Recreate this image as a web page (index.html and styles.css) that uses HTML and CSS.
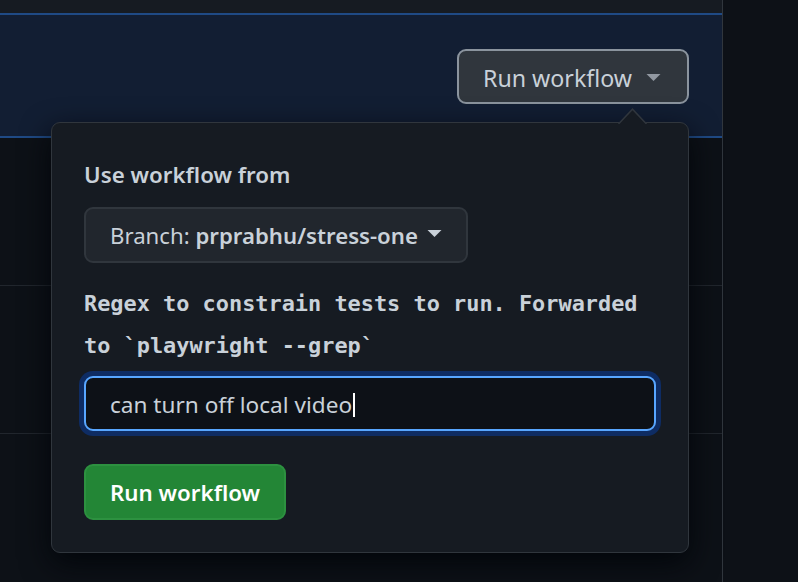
FILE: index.html
```html
<!DOCTYPE html>
<html lang="en">
<head>
<meta charset="utf-8">
<title>Run workflow</title>
<link rel="stylesheet" href="styles.css">
</head>
<body>
<div class="page">
  <main class="col">
    <div class="topbar"></div>
    <section class="banner">
      <button class="btn-run" type="button">
        <span>Run workflow</span>
        <svg class="tri" width="16" height="8" viewBox="0 0 16 8"><path d="M0 0h16L8 8z" fill="currentColor"/></svg>
      </button>
    </section>
    <div class="row"></div>
    <div class="row"></div>
    <div class="row last"></div>

    <div class="popover">
      <svg class="arrow" width="29" height="16" viewBox="0 0 29 16"><path d="M0.5 16 L14.5 1.2 L28.5 16" fill="#161b22" stroke="#30363d" stroke-width="1.5"/></svg>
      <div class="pop-title">Use workflow from</div>
      <button class="btn-branch" type="button">
        <span class="branch-label">Branch: <b>prprabhu/stress-one</b></span>
        <svg class="tri" width="16" height="8" viewBox="0 0 16 8"><path d="M0 0h16L8 8z" fill="currentColor"/></svg>
      </button>
      <div class="field-label">Regex to constrain tests to run. Forwarded to `playwright --grep`</div>
      <div class="input"><span class="value">can turn off local video</span><span class="cursor"></span></div>
      <button class="btn-green" type="button">Run workflow</button>
    </div>
  </main>
  <aside class="side"></aside>
</div>
</body>
</html>
```
FILE: styles.css
```css
html, body {
  margin: 0;
  padding: 0;
  background: #0d1117;
  height: 100%;
  overflow: hidden;
}
body {
  font-family: "Noto Sans", "Open Sans", sans-serif;
  color: #c9d1d9;
}
.page {
  display: flex;
  height: 582px;
}
.col {
  position: relative;
  width: 722px;
  border-right: 1px solid #30363d;
  display: flex;
  flex-direction: column;
  background: #0d1117;
}
.side {
  flex: 1;
  background: #0d1117;
}
.topbar {
  height: 13px;
  background: #161b22;
}
.banner {
  border-top: 2px solid #1f4a85;
  border-bottom: 2px solid #1f4a85;
  background: #121e33;
  display: flex;
  justify-content: flex-end;
  align-items: flex-start;
  padding: 34px 33px 0 0;
  box-sizing: content-box;
  height: 87px;
}
.row {
  height: 147px;
  border-bottom: 1px solid #21262d;
}
.row.last {
  flex: 1;
  border-bottom: 0;
}
button {
  font-family: inherit;
  cursor: pointer;
}
.btn-run {
  height: 55px;
  width: 232px;
  box-sizing: border-box;
  border: 2px solid #8b949e;
  border-radius: 9px;
  background: #30363d;
  color: #c9d1d9;
  font-size: 23.2px;
  display: flex;
  align-items: center;
  gap: 14px;
  padding: 2px 0 0 24px;
}
.btn-run .tri {
  color: #9198a1;
  width: 15px;
  height: 7px;
}
.popover {
  position: absolute;
  left: 51px;
  top: 122px;
  width: 638px;
  box-sizing: border-box;
  background: #161b22;
  border: 1px solid #30363d;
  border-radius: 9px;
  padding: 32px 32px 32px;
  box-shadow: 0 10px 30px rgba(1, 4, 9, 0.9);
  display: flex;
  flex-direction: column;
  align-items: flex-start;
}
.arrow {
  position: absolute;
  top: -15px;
  left: 566px;
}
.pop-title {
  font-size: 22.3px;
  font-weight: 600;
  line-height: 33px;
  padding-top: 3px;
  color: #c9d1d9;
}
.btn-branch {
  margin-top: 16px;
  height: 56px;
  box-sizing: border-box;
  border: 2px solid #30363d;
  border-radius: 9px;
  background: #21262d;
  color: #c9d1d9;
  font-size: 22.2px;
  display: flex;
  align-items: center;
  gap: 9px;
  padding: 0 24px 0 24px;
}
.btn-branch b {
  font-weight: 600;
}
.btn-branch .tri {
  color: #c9d1d9;
  width: 15px;
  height: 7px;
  margin-top: -4px;
}
.field-label {
  margin-top: 20px;
  font-family: "DejaVu Sans Mono", "Liberation Mono", monospace;
  font-weight: bold;
  font-size: 21.9px;
  line-height: 42px;
  color: #c9d1d9;
}
.input {
  margin-top: 9px;
  width: 100%;
  height: 55px;
  box-sizing: border-box;
  border: 2px solid #58a6ff;
  border-radius: 9px;
  background: #0d1117;
  box-shadow: 0 0 0 5px #0e2c63;
  display: flex;
  align-items: center;
  padding: 2px 0 0 24px;
  font-size: 22.6px;
  color: #c9d1d9;
}
.cursor {
  display: inline-block;
  width: 2px;
  height: 24px;
  background: #ffffff;
  margin-left: 1px;
}
.btn-green {
  margin-top: 33px;
  height: 56px;
  box-sizing: border-box;
  border: 2px solid #2d9140;
  border-radius: 9px;
  background: #238636;
  color: #ffffff;
  font-size: 22.3px;
  font-weight: 600;
  padding: 0 24px;
}
```
